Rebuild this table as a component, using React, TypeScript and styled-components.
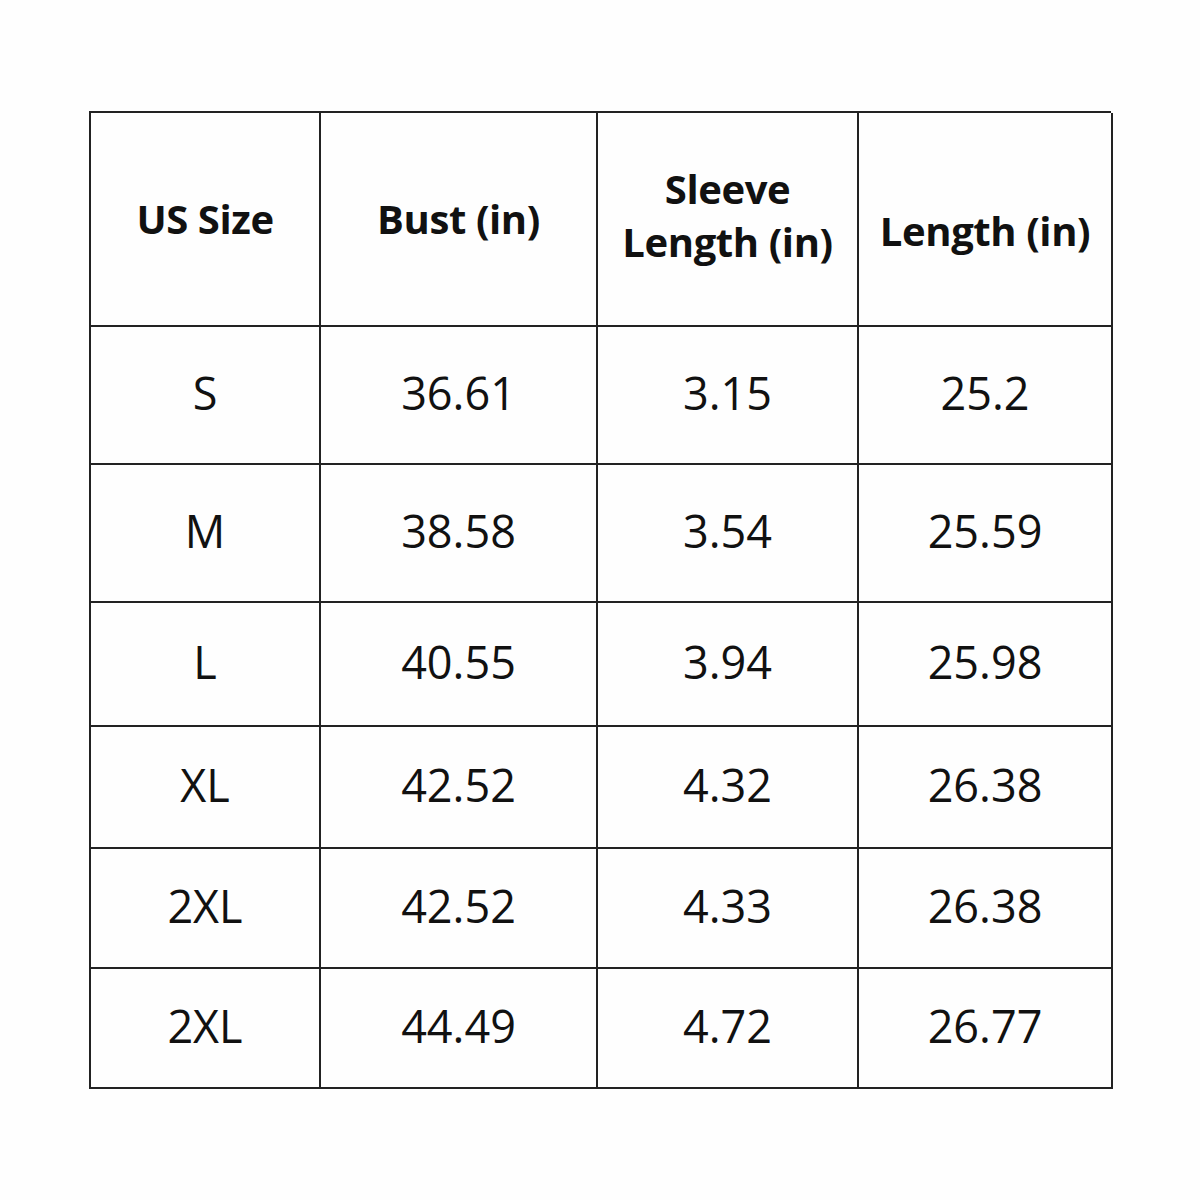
import React from "react";
import styled, { createGlobalStyle } from "styled-components";

const Global = createGlobalStyle`
  html, body { margin: 0; padding: 0; background: #ffffff; }
  body { font-family: "Open Sans", "Noto Sans", sans-serif; color: #111; }
`;

const Page = styled.div`
  width: 1200px;
  height: 1200px;
  padding: 111px 0 0 89px;
  box-sizing: border-box;
  background: #fefefe;
`;

const Grid = styled.div`
  display: grid;
  width: 1022px;
  grid-template-columns: 230px 277px 261px 254px;
  grid-template-rows: 214px 138px 138px 124px 122px 120px 120px;
  border-top: 2px solid #222;
  border-left: 2px solid #222;
  box-sizing: border-box;
`;

const Cell = styled.div<{ $head?: boolean; $shift?: number }>`
  display: flex;
  align-items: center;
  justify-content: center;
  text-align: center;
  border-right: 2px solid #222;
  border-bottom: 2px solid #222;
  box-sizing: border-box;
  font-size: ${(p) => (p.$head ? "40px" : "45px")};
  font-weight: ${(p) => (p.$head ? 700 : 400)};
  line-height: ${(p) => (p.$head ? "53px" : "1")};
  letter-spacing: ${(p) => (p.$head ? "-0.4px" : "0")};
  padding-top: ${(p) => Math.max(p.$shift ?? 0, 0)}px;
  padding-bottom: ${(p) => Math.max(-(p.$shift ?? 0), 0)}px;
  color: #111;
`;

const headers: { text: React.ReactNode; shift: number }[] = [
  { text: "US Size", shift: -2 },
  { text: "Bust (in)", shift: -2 },
  { text: <>Sleeve<br />Length (in)</>, shift: -8 },
  { text: "Length (in)", shift: 22 },
];

const rows = [
  ["S", "36.61", "3.15", "25.2"],
  ["M", "38.58", "3.54", "25.59"],
  ["L", "40.55", "3.94", "25.98"],
  ["XL", "42.52", "4.32", "26.38"],
  ["2XL", "42.52", "4.33", "26.38"],
  ["2XL", "44.49", "4.72", "26.77"],
];

export default function App() {
  return (
    <>
      <Global />
      <Page>
        <Grid>
          {headers.map((h, i) => (
            <Cell key={`h${i}`} $head $shift={h.shift}>
              {h.text}
            </Cell>
          ))}
          {rows.map((r, ri) =>
            r.map((c, ci) => (
              <Cell key={`${ri}-${ci}`} $shift={-6}>
                {c}
              </Cell>
            ))
          )}
        </Grid>
      </Page>
    </>
  );
}
